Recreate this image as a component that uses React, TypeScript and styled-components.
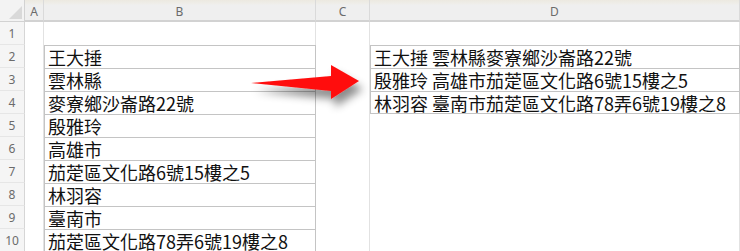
import { styled, createGlobalStyle } from 'styled-components';

const GlobalStyle = createGlobalStyle`
  html, body {
    margin: 0;
    padding: 0;
    background: #ffffff;
  }
`;

const COLS = ['A', 'B', 'C', 'D'];
const COL_WIDTHS = '25px 19px 272px 54px 370px';

const colB = [
  '王大捶',
  '雲林縣',
  '麥寮鄉沙崙路22號',
  '殷雅玲',
  '高雄市',
  '茄萣區文化路6號15樓之5',
  '林羽容',
  '臺南市',
  '茄萣區文化路78弄6號19樓之8',
];

const colD = [
  '王大捶 雲林縣麥寮鄉沙崙路22號',
  '殷雅玲 高雄市茄萣區文化路6號15樓之5',
  '林羽容 臺南市茄萣區文化路78弄6號19樓之8',
];

const ROWS = 10;

const App = () => {
  const rows = Array.from({ length: ROWS }, (_, i) => i + 1);

  return (
    <>
      <GlobalStyle />
      <SSheet>
        <SCorner>
          <svg width="25" height="22" viewBox="0 0 25 22">
            <polygon points="22,6 22,19 9,19" fill="#d9d9d9" />
          </svg>
        </SCorner>
        {COLS.map(col => (
          <SColHeader key={col}>{col}</SColHeader>
        ))}

        {rows.map(row => {
          const b = row >= 2 ? colB[row - 2] : undefined;
          const d = row >= 2 && row <= 4 ? colD[row - 2] : undefined;
          return [
            <SRowHeader key={`h${row}`}>{row}</SRowHeader>,
            <SCell key={`a${row}`} />,
            <SCell key={`b${row}`} $boxed={b !== undefined} $last={row === 10}>
              {b}
            </SCell>,
            <SCell key={`c${row}`} />,
            <SCell key={`d${row}`} $boxed={d !== undefined} $last={row === 4}>
              {d}
            </SCell>,
          ];
        })}

        <SArrow width="130" height="60" viewBox="0 0 130 60">
          <defs>
            <filter id="shadow" x="-20%" y="-40%" width="150%" height="200%">
              <feDropShadow dx="4" dy="8" stdDeviation="4" floodColor="#000" floodOpacity="0.45" />
            </filter>
          </defs>
          <polygon
            points="2,28 82,21 82,10 110,26 82,44 82,36"
            fill="#ff0d0d"
            filter="url(#shadow)"
          />
        </SArrow>
      </SSheet>
    </>
  );
};

const SSheet = styled.div`
  position: relative;
  display: grid;
  grid-template-columns: ${COL_WIDTHS};
  grid-template-rows: 22px repeat(${ROWS}, 23px);
  width: 740px;
  height: 251px;
  overflow: hidden;
  background: #ffffff;
`;

const SCorner = styled.div`
  background: #f3f3f3;
  border-bottom: 1px solid #d2d2d2;
  border-right: 1px solid #d2d2d2;
  box-sizing: border-box;
  line-height: 0;
`;

const SColHeader = styled.div`
  display: flex;
  align-items: center;
  justify-content: center;
  box-sizing: border-box;
  background: linear-gradient(#ece9e0 0, #efeeea 4px, #efefef 5px);
  border-right: 1px solid #dadada;
  border-bottom: 2px solid #d2d2d2;
  color: #6b6b6b;
  font-family: 'Noto Sans', 'Liberation Sans', sans-serif;
  font-size: 12px;
  padding-top: 3px;
`;

const SRowHeader = styled.div`
  display: flex;
  align-items: center;
  justify-content: center;
  box-sizing: border-box;
  background: #f5f5f5;
  border-right: 1px solid #d6d6d6;
  border-bottom: 1px solid #e6e6e6;
  color: #6b6b6b;
  font-family: 'Noto Sans', 'Liberation Sans', sans-serif;
  font-size: 12px;
`;

const SCell = styled.div<{ $boxed?: boolean; $last?: boolean }>`
  display: flex;
  align-items: center;
  box-sizing: border-box;
  padding-left: 3px;
  white-space: nowrap;
  border-right: 1px solid #e2e2e2;
  color: #111111;
  font-family: 'Noto Sans CJK TC', 'Noto Sans', sans-serif;
  font-size: 18px;
  line-height: 22px;

  ${({ $boxed }) =>
    $boxed &&
    `
    border: 1px solid #c4c4c4;
    border-bottom: none;
  `}

  ${({ $boxed, $last }) => $boxed && $last && `border-bottom: 1px solid #c4c4c4;`}
`;

const SArrow = styled.svg`
  position: absolute;
  left: 249px;
  top: 55px;
  pointer-events: none;
  overflow: visible;
`;

export default App;
